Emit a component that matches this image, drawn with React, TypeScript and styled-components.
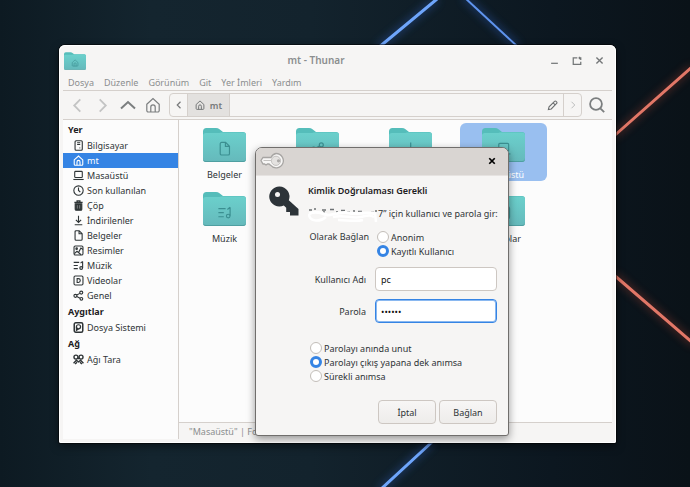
import React, { useState } from 'react';
import styled, { createGlobalStyle, css } from 'styled-components';

const BLUE = '#3584e4';
const INK = '#2e3436';
const DIM = '#8b8e8f';
const LINE = '#d5d0cc';

const GlobalStyle = createGlobalStyle`
  *, *::before, *::after { box-sizing: border-box; }
  html, body { margin: 0; background: #0d1820; }
  body, button, input {
    font-family: 'Noto Sans', 'Open Sans', sans-serif;
    font-size: 9px;
    line-height: 15px;
    color: ${INK};
  }
  button { padding: 0; border: 0; background: none; cursor: default; }
  ul, h1, h2, p { margin: 0; padding: 0; list-style: none; font-size: 9px; }
  svg { display: block; flex: none; }
`;

/* ---------- icons ---------- */

const shapes: Record<string, React.ReactNode> = {
  computer: (
    <>
      <rect x="3" y="1" width="10.5" height="14" rx="1.5" />
      <path d="M6 4h4.5M6 6.5h4.5M9.5 11.5h1" />
    </>
  ),
  home: (
    <path d="M1.8 7.2 8 1.5l6.2 5.7v6.3a1.5 1.5 0 0 1-1.5 1.5H3.3a1.5 1.5 0 0 1-1.5-1.5zM5.8 15V10a2.2 2.2 0 0 1 4.4 0v5" />
  ),
  desktop: (
    <>
      <rect x="2.5" y="2" width="11" height="9" rx="1.2" />
      <path d="M.5 13.8h15" />
    </>
  ),
  recent: (
    <>
      <circle cx="8" cy="8" r="6.8" />
      <path d="M8 3.8V8l2.6 2.2" />
    </>
  ),
  trash: (
    <>
      <path d="M2 3.5h12M6 3V1.2h4V3" strokeWidth="2" />
      <path d="M3.2 5.5h9.6v8a1.5 1.5 0 0 1-1.5 1.5H4.7a1.5 1.5 0 0 1-1.5-1.5z" fill="currentColor" />
      <path d="M6.3 7.5v5M9.7 7.5v5" stroke="#9a9d9e" strokeWidth="1" />
    </>
  ),
  download: <path d="M8 1v9.5M4.2 7 8 10.8 11.8 7M2.5 14.2h11" />,
  document: <path d="M3 2.5A1.5 1.5 0 0 1 4.5 1H9l4.3 4.3v8.2a1.5 1.5 0 0 1-1.5 1.5H4.5A1.5 1.5 0 0 1 3 13.5zM8.8 1.2v4.3H13" />,
  picture: (
    <>
      <rect x="1.5" y="1.5" width="13" height="13" rx="1.8" />
      <circle cx="5.3" cy="5.3" r="1.1" />
      <path d="m2 12.5 3.8-3.3 6 5M8.5 10l3-5.5 3 2" />
    </>
  ),
  music: (
    <>
      <path d="M1 3.5h8M1 8h6M1 12.5h6M14 2v9.5M11 4.5 14 2" />
      <circle cx="11.9" cy="11.7" r="2" />
    </>
  ),
  video: (
    <>
      <rect x="1.5" y="1.5" width="13" height="13" rx="1.8" />
      <path d="M6 5.2v5.6h1.8a2.8 2.8 0 0 0 0-5.6z" />
    </>
  ),
  share: (
    <>
      <circle cx="3.5" cy="8.5" r="2.2" />
      <circle cx="12" cy="3.8" r="2.2" />
      <circle cx="12.2" cy="12.8" r="2" />
      <path d="m5.5 7.4 4.5-2.5M5.5 9.5l4.8 2.4" />
    </>
  ),
  template: <path d="M3 1.5h10v13H3zM5.5 5h5M5.5 8h5" />,
  disk: (
    <>
      <rect x="1.8" y="1.2" width="12.4" height="13.6" rx="2.2" strokeWidth="2.2" />
      <circle cx="8" cy="7" r="3" strokeWidth="1.8" />
      <path d="M5 7v5l3-2" strokeWidth="1.8" />
    </>
  ),
  network: (
    <>
      <circle cx="4.3" cy="4.5" r="2.9" strokeWidth="2" />
      <circle cx="11.7" cy="4.5" r="2.9" strokeWidth="2" />
      <path d="M.8 13.5 5 9l3 2.5L11 9l4.200 4.500M3 14.500l3-2.500M13 14.500 10 12M8 5v2.500" strokeWidth="1.9" />
    </>
  ),
  left: <path d="M11 1.500 4.500 8l6.500 6.500" />,
  right: <path d="M5 1.500 11.500 8 5 14.500" />,
  up: <path d="M1 11.500 8 5l7 6.500" />,
  search: (
    <>
      <circle cx="7" cy="7" r="5.9" />
      <path d="m11.300 11.300 3.900 3.900" />
    </>
  ),
  pencil: <path d="m2 14 1-4.200L11 2a1.500 1.500 0 0 1 2.200 0l.8.8a1.500 1.500 0 0 1 0 2.200L6.200 13zM9 4.300 11.800 7" />,
  minimize: <path d="M2 13h12" />,
  maximize: <path d="M8.500 3H2v10.500h12V9M10.500 3H14v3.500M12 1v4M10.500 3h3" />,
  close: <path d="m2.500 2.500 11 11M13.500 2.500l-11 11" />,
};

const Icon = ({ name, size = 11, weight = 1.6 }: { name: string; size?: number; weight?: number }) => (
  <svg width={size} height={size} viewBox="0 0 16 16" fill="none" stroke="currentColor" strokeWidth={weight} aria-hidden="true">
    {shapes[name]}
  </svg>
);

const Folder = ({ emblem, width = 43, height = 34 }: { emblem: string; width?: number; height?: number }) => (
  <svg width={width} height={height} viewBox="0 0 43 34" aria-hidden="true">
    <defs>
      <linearGradient id="folderFront" x1="0" y1="0" x2="0" y2="1">
        <stop offset="0" stopColor="#6bd0cc" />
        <stop offset="1" stopColor="#65b9bb" />
      </linearGradient>
    </defs>
    <path d="M0 3.500Q0 0 3.500 0H13q2 0 3.500 1.300L20 4H40q3 0 3 3V20H0z" fill="#55bdba" />
    <path d="M0 7.500Q0 5 3 5h11.500q2 0 3.500-.5h22q3 0 3 3V31q0 3-3 3H3q-3 0-3-3z" fill="url(#folderFront)" />
    <path d="M0 30v1q0 3 3 3h37q3 0 3-3v-1q0 3-3 3H3q-3 0-3-3z" fill="#4f9fa1" />
    <g transform="translate(14.500 13.500) scale(.9)" fill="none" stroke="#3b8f91" strokeWidth="1.300">
      {shapes[emblem]}
    </g>
  </svg>
);

const SilverKey = () => (
  <svg width="24" height="18" viewBox="0 0 24 18" aria-hidden="true">
    <path
      d="M16 1.500a7.200 7.200 0 1 1-5.500 11.700L9 12H7.500l-1.500 1-1.500-1H3L1 8.500 3 5.500h8A7.200 7.200 0 0 1 16 1.500z"
      fill="#f7f6f5" stroke="#a7a5a3" strokeWidth="1.300"
    />
    <circle cx="16" cy="8.800" r="4.600" fill="#e4e2e0" stroke="#c4c2c0" />
    <circle cx="18.500" cy="8.800" r="1.600" fill="#aaa8a6" />
    <path d="M3.500 8.500h7.500" stroke="#c4c2c0" />
  </svg>
);

const DarkKey = () => (
  <svg width="30" height="30" viewBox="0 0 30 30" aria-hidden="true">
    <path
      d="M10.500.5a10 10 0 0 1 9.300 13.700L29.500 23v6.500h-8.500V26h-3.800v-4.200l-2.400-2.400A10 10 0 1 1 10.500.5z"
      fill="#2d3439"
    />
    <circle cx="8.500" cy="8.500" r="2.500" fill="#f6f5f4" />
  </svg>
);

const Redaction = () => (
  <svg width="70" height="20" viewBox="0 0 70 20" fill="none" aria-hidden="true">
    <path d="M1 6h3M6 5h2M14 6h4M15 8h2M22 5.500h4M28 8h2M33 6.500h4M39 8h3M45 7h2M50 7.500h4M57 9h3M63 8.500h3M67 7h2" stroke="#6d7173" strokeWidth="1.500" />
    <path d="M1 10c7-4 15 0 18 1s14-4 22-2 17-2 27 1" stroke="#fff" strokeWidth="3" />
    <path d="M1 10c0 7 10 9 17 3M25 13c10-3 19 2 28 0s9-2 13 0M30 16c8 0 18 2 25 0M67 9l1 9" stroke="#fff" strokeWidth="2.500" />
  </svg>
);

/* ---------- desktop ---------- */

const Desktop = styled.main`
  position: relative;
  display: flex;
  min-height: 100vh;
  padding: 45px 74px 44px 59px;
  background: linear-gradient(90deg, #0d1a22 0%, #14252f 22%, #13232d 45%, #0c1720 80%, #0a1218 100%);
  overflow: hidden;
`;

const Wallpaper = styled.svg`
  position: absolute;
  inset: 0;
  width: 100%;
  height: 100%;
`;

const NeonLines = () => (
  <Wallpaper viewBox="0 0 690 487" preserveAspectRatio="xMidYMid slice" aria-hidden="true">
    <defs>
      <filter id="glow" x="-50%" y="-50%" width="200%" height="200%"><feGaussianBlur stdDeviation="4" /></filter>
    </defs>
    <g fill="none" filter="url(#glow)" opacity=".5">
      <path d="M437-1 378 48M432 442 380 490M464-3l54 50" stroke="#2f62c4" strokeWidth="5" />
      <path d="M692 67 614 136M614 275l80 69" stroke="#a8402f" strokeWidth="5" />
    </g>
    <g fill="none">
      <path d="M437-1 378 48M432 442 380 490" stroke="#6ea5fb" strokeWidth="3" />
      <path d="m464-3 54 50" stroke="#5f94ee" strokeWidth="2" />
      <path d="M692 67 614 136M614 275l80 69" stroke="#e27767" strokeWidth="3" />
    </g>
  </Wallpaper>
);

/* ---------- file manager ---------- */

const FileWindow = styled.section`
  position: relative;
  flex: 1;
  display: flex;
  flex-direction: column;
  min-width: 0;
  padding: 1px 4px 4px;
  border-radius: 6px 6px 2px 2px;
  background: #f6f5f4;
  box-shadow: inset 0 0 0 1px #fff, 0 0 0 1px rgba(0, 0, 0, 0.5), 0 3px 8px rgba(0, 0, 0, 0.5);
`;

const TitleBar = styled.header`
  display: grid;
  grid-template-columns: auto 1fr auto;
  align-items: center;
  height: 29px;
  padding-left: 1px;
  text-align: center;
`;

const WindowTitle = styled.h1`
  && { font-size: 10px; }
  padding-right: 4px;
  font-weight: 600;
  color: ${DIM};
`;

const WindowButtons = styled.div`
  display: flex;
  justify-content: flex-end;
  gap: 13px;
  padding-right: 8px;
`;

const WindowButton = styled.button`
  color: #747778;
`;

const MenuBar = styled.nav`
  display: flex;
  gap: 10px;
  height: 16px;
  padding-left: 5px;
  border-bottom: 1px solid ${LINE};
`;

const MenuButton = styled.button`
  height: 15px;
  color: ${DIM};
`;

const ToolBar = styled.div`
  display: flex;
  align-items: center;
  height: 29px;
  padding: 0 7px 0 2px;
  border-bottom: 1px solid ${LINE};
`;

const ToolButton = styled.button<{ $faded?: boolean }>`
  display: grid;
  place-items: center;
  width: 25px;
  color: ${({ $faded }) => ($faded ? '#c3c4c4' : '#7b7e7f')};
`;

const SearchButton = styled.button`
  color: #7b7e7f;
`;

const PathBar = styled.div`
  flex: 1;
  display: flex;
  height: 24px;
  margin: 0 7px 0 4px;
  border: 1px solid ${LINE};
  border-radius: 4px;
`;

const PathButton = styled.button<{ $current?: boolean; $edge?: 'left' | 'right' }>`
  display: flex;
  align-items: center;
  justify-content: center;
  gap: 5px;
  width: ${({ $current }) => ($current ? '42px' : '18px')};
  color: ${({ $edge }) => ($edge === 'right' ? '#bcbdbd' : '#77797a')};
  font-weight: 600;
  ${({ $current }) => $current && css`background: #e3e1df;`}
  ${({ $edge }) => $edge === 'right' && css`border-left: 1px solid ${LINE};`}
  ${({ $edge }) => $edge !== 'right' && css`border-right: 1px solid ${LINE};`}
`;

const EditButton = styled.button`
  display: grid;
  place-items: center;
  width: 22px;
  margin-left: auto;
  color: #6c6f70;
`;

const Body = styled.div`
  flex: 1;
  display: flex;
  min-height: 0;
`;

const SideBar = styled.aside`
  width: 116px;
  padding-top: 1px;
  border-right: 1px solid ${LINE};
  background: #fcfcfc;
`;

const SideHeading = styled.h2`
  padding: 1px 0 1px 5px;
  font-weight: 700;
  color: #1d2123;
`;

const SideLink = styled.a<{ $active: boolean }>`
  display: flex;
  align-items: center;
  gap: 3px;
  height: 15px;
  padding-left: 10px;
  color: ${({ $active }) => ($active ? '#fff' : INK)};
  background: ${({ $active }) => ($active ? BLUE : 'transparent')};
  text-decoration: none;
`;

const MainPane = styled.div`
  flex: 1;
  display: flex;
  flex-direction: column;
  min-width: 0;
`;

const FileGrid = styled.ul`
  && { padding: 3px 2px; }
  flex: 1;
  display: grid;
  grid-template-columns: repeat(auto-fill, 87px);
  grid-auto-rows: 58px;
  gap: 6px;
  background: #fcfcfc;
`;

const Tile = styled.li<{ $selected: boolean }>`
  display: flex;
  flex-direction: column;
  align-items: center;
  gap: 5px;
  padding-top: 5px;
  border-radius: 6px;
  ${({ $selected }) => $selected && css`
    background: #99bff0;
    color: #fff;
  `}
`;

const StatusBar = styled.footer`
  height: 17px;
  padding: 1px 10px;
  border-top: 1px solid ${LINE};
  color: ${DIM};
  white-space: nowrap;
  overflow: hidden;
`;

/* ---------- authentication dialog ---------- */

const Dialog = styled.section`
  position: absolute;
  top: 147px;
  left: 255px;
  width: 254px;
  border: 1px solid #706e6c;
  border-radius: 7px 7px 3px 3px;
  background: #f6f5f4;
  box-shadow: 0 3px 9px rgba(0, 0, 0, 0.4);
  overflow: hidden;
`;

const DialogBar = styled.header`
  display: flex;
  align-items: center;
  justify-content: space-between;
  height: 28px;
  padding: 0 12px 2px 4px;
  background: #d9d5d2;
  border-bottom: 1px solid #e6e3e1;
`;

const DialogClose = styled.button`
  color: #000;
`;

const DialogBody = styled.form`
  display: grid;
  grid-template-columns: 30px minmax(0, 1fr);
  column-gap: 9px;
  padding: 7px 11px 11px 13px;
`;

const KeySlot = styled.div`
  padding-top: 3px;
`;

const Content = styled.div`
  display: flex;
  flex-direction: column;
  white-space: nowrap;
`;

const DialogTitle = styled.h2`
  font-weight: 600;
  color: #1d2123;
`;

const Message = styled.p`
  display: flex;
  align-items: center;
  height: 15px;
  margin: 8px 0;
`;

const FieldGroup = styled.div`
  display: grid;
  grid-template-columns: 58px minmax(0, 1fr);
  column-gap: 9px;
  row-gap: 8px;
  align-items: center;
  text-align: right;
`;

const AccountGroup = styled(FieldGroup)`
  grid-template-columns: 61px minmax(0, 1fr);
  column-gap: 6px;
`;

const Choices = styled.div<{ $top?: number }>`
  display: grid;
  grid-auto-rows: 14px;
  padding: ${({ $top = 0 }) => `${$top}px 0 0 2px`};
`;

const Choice = styled.label`
  display: flex;
  align-items: center;
  gap: 2px;
`;

const Radio = styled.input`
  appearance: none;
  width: 12px;
  height: 12px;
  margin: 0;
  border: 1px solid #c3beb9;
  border-radius: 50%;
  background: #fff;
  &:checked { border: 3px solid ${BLUE}; }
`;

const TopLabel = styled.span`
  align-self: start;
`;

const TextField = styled.input`
  width: 100%;
  height: 24px;
  padding: 0 5px;
  border: 1px solid #cdc7c2;
  border-radius: 4px;
  background: #fff;
  color: #111;
  outline: none;
  &[type='password'] { border-color: ${BLUE}; box-shadow: inset 0 0 0 1px #8ab8f0; }
`;

const Fields = styled(FieldGroup)`
  margin: 9px 0 18px;
`;

const Actions = styled.div`
  display: flex;
  justify-content: flex-end;
  gap: 3px;
  margin-top: 17px;
`;

const ActionButton = styled.button`
  width: 58px;
  height: 24px;
  border: 1px solid #cdc7c2;
  border-radius: 4px;
  background: linear-gradient(#f7f6f5, #eeecea);
`;

/* ---------- data ---------- */

const menus = ['Dosya', 'Düzenle', 'Görünüm', 'Git', 'Yer İmleri', 'Yardım'];

const places = [
  {
    title: 'Yer',
    items: [
      ['computer', 'Bilgisayar'], ['home', 'mt'], ['desktop', 'Masaüstü'], ['recent', 'Son kullanılan'],
      ['trash', 'Çöp'], ['download', 'İndirilenler'], ['document', 'Belgeler'], ['picture', 'Resimler'],
      ['music', 'Müzik'], ['video', 'Videolar'], ['share', 'Genel'],
    ],
  },
  { title: 'Aygıtlar', items: [['disk', 'Dosya Sistemi']] },
  { title: 'Ağ', items: [['network', 'Ağı Tara']] },
];

const folders = [
  ['document', 'Belgeler'], ['share', 'Genel'], ['download', 'İndirilenler'], ['desktop', 'Masaüstü'],
  ['music', 'Müzik'], ['picture', 'Resimler'], ['template', 'Şablonlar'], ['video', 'Videolar'],
];

const memory = ['Parolayı anında unut', 'Parolayı çıkış yapana dek anımsa', 'Sürekli anımsa'];

export default function App() {
  const [account, setAccount] = useState('Kayıtlı Kullanıcı');
  const [remember, setRemember] = useState(memory[1]);
  const [user, setUser] = useState('pc');
  const [password, setPassword] = useState('parola');

  return (
    <>
      <GlobalStyle />
      <Desktop>
        <NeonLines />
        <FileWindow>
          <TitleBar>
            <Folder emblem="home" width={22} height={18} />
            <WindowTitle>mt - Thunar</WindowTitle>
            <WindowButtons>
              <WindowButton aria-label="Simge durumuna küçült"><Icon name="minimize" weight={2.2} size={9} /></WindowButton>
              <WindowButton aria-label="Büyüt"><Icon name="maximize" weight={2} size={10} /></WindowButton>
              <WindowButton aria-label="Kapat"><Icon name="close" weight={2.4} size={9} /></WindowButton>
            </WindowButtons>
          </TitleBar>
          <MenuBar>
            {menus.map((m) => <MenuButton key={m}>{m}</MenuButton>)}
          </MenuBar>
          <ToolBar>
            <ToolButton $faded aria-label="Geri"><Icon name="left" size={15} weight={1.9} /></ToolButton>
            <ToolButton $faded aria-label="İleri"><Icon name="right" size={15} weight={1.9} /></ToolButton>
            <ToolButton aria-label="Yukarı"><Icon name="up" size={16} weight={2} /></ToolButton>
            <ToolButton aria-label="Ev"><Icon name="home" size={16} weight={1.2} /></ToolButton>
            <PathBar>
              <PathButton $edge="left" aria-label="Önceki"><Icon name="left" size={8} weight={2.4} /></PathButton>
              <PathButton $current><Icon name="home" size={10} />mt</PathButton>
              <EditButton aria-label="Konumu düzenle"><Icon name="pencil" size={11} /></EditButton>
              <PathButton $edge="right" aria-label="Sonraki"><Icon name="right" size={8} weight={2} /></PathButton>
            </PathBar>
            <SearchButton aria-label="Ara"><Icon name="search" size={16} weight={1.8} /></SearchButton>
          </ToolBar>
          <Body>
            <SideBar>
              {places.map((group) => (
                <React.Fragment key={group.title}>
                  <SideHeading>{group.title}</SideHeading>
                  {group.items.map(([icon, label]) => (
                    <SideLink key={label} href="#" $active={label === 'mt'}>
                      <Icon name={icon} />
                      {label}
                    </SideLink>
                  ))}
                </React.Fragment>
              ))}
            </SideBar>
            <MainPane>
              <FileGrid>
                {folders.map(([icon, label]) => (
                  <Tile key={label} $selected={label === 'Masaüstü'}>
                    <Folder emblem={icon} />
                    <span>{label}</span>
                  </Tile>
                ))}
              </FileGrid>
              <StatusBar>"Masaüstü" | Folder</StatusBar>
            </MainPane>
          </Body>
        </FileWindow>

        <Dialog role="dialog" aria-labelledby="auth-title">
          <DialogBar>
            <SilverKey />
            <DialogClose aria-label="Kapat"><Icon name="close" size={8} weight={3.4} /></DialogClose>
          </DialogBar>
          <DialogBody onSubmit={(e) => e.preventDefault()}>
            <KeySlot><DarkKey /></KeySlot>
            <Content>
              <DialogTitle id="auth-title">Kimlik Doğrulaması Gerekli</DialogTitle>
              <Message><Redaction />7” için kullanıcı ve parola gir:</Message>
              <AccountGroup role="radiogroup" aria-labelledby="connect-as">
                <TopLabel id="connect-as">Olarak Bağlan</TopLabel>
                <Choices $top={1}>
                  {['Anonim', 'Kayıtlı Kullanıcı'].map((o) => (
                    <Choice key={o}>
                      <Radio type="radio" name="account" checked={account === o} onChange={() => setAccount(o)} />
                      {o}
                    </Choice>
                  ))}
                </Choices>
              </AccountGroup>
              <Fields>
                <label htmlFor="user">Kullanıcı Adı</label>
                <TextField id="user" value={user} onChange={(e) => setUser(e.target.value)} />
                <label htmlFor="password">Parola</label>
                <TextField id="password" type="password" value={password} onChange={(e) => setPassword(e.target.value)} />
              </Fields>
              <Choices>
                {memory.map((o) => (
                  <Choice key={o}>
                    <Radio type="radio" name="remember" checked={remember === o} onChange={() => setRemember(o)} />
                    {o}
                  </Choice>
                ))}
              </Choices>
              <Actions>
                <ActionButton type="button">İptal</ActionButton>
                <ActionButton type="submit">Bağlan</ActionButton>
              </Actions>
            </Content>
          </DialogBody>
        </Dialog>
      </Desktop>
    </>
  );
}
